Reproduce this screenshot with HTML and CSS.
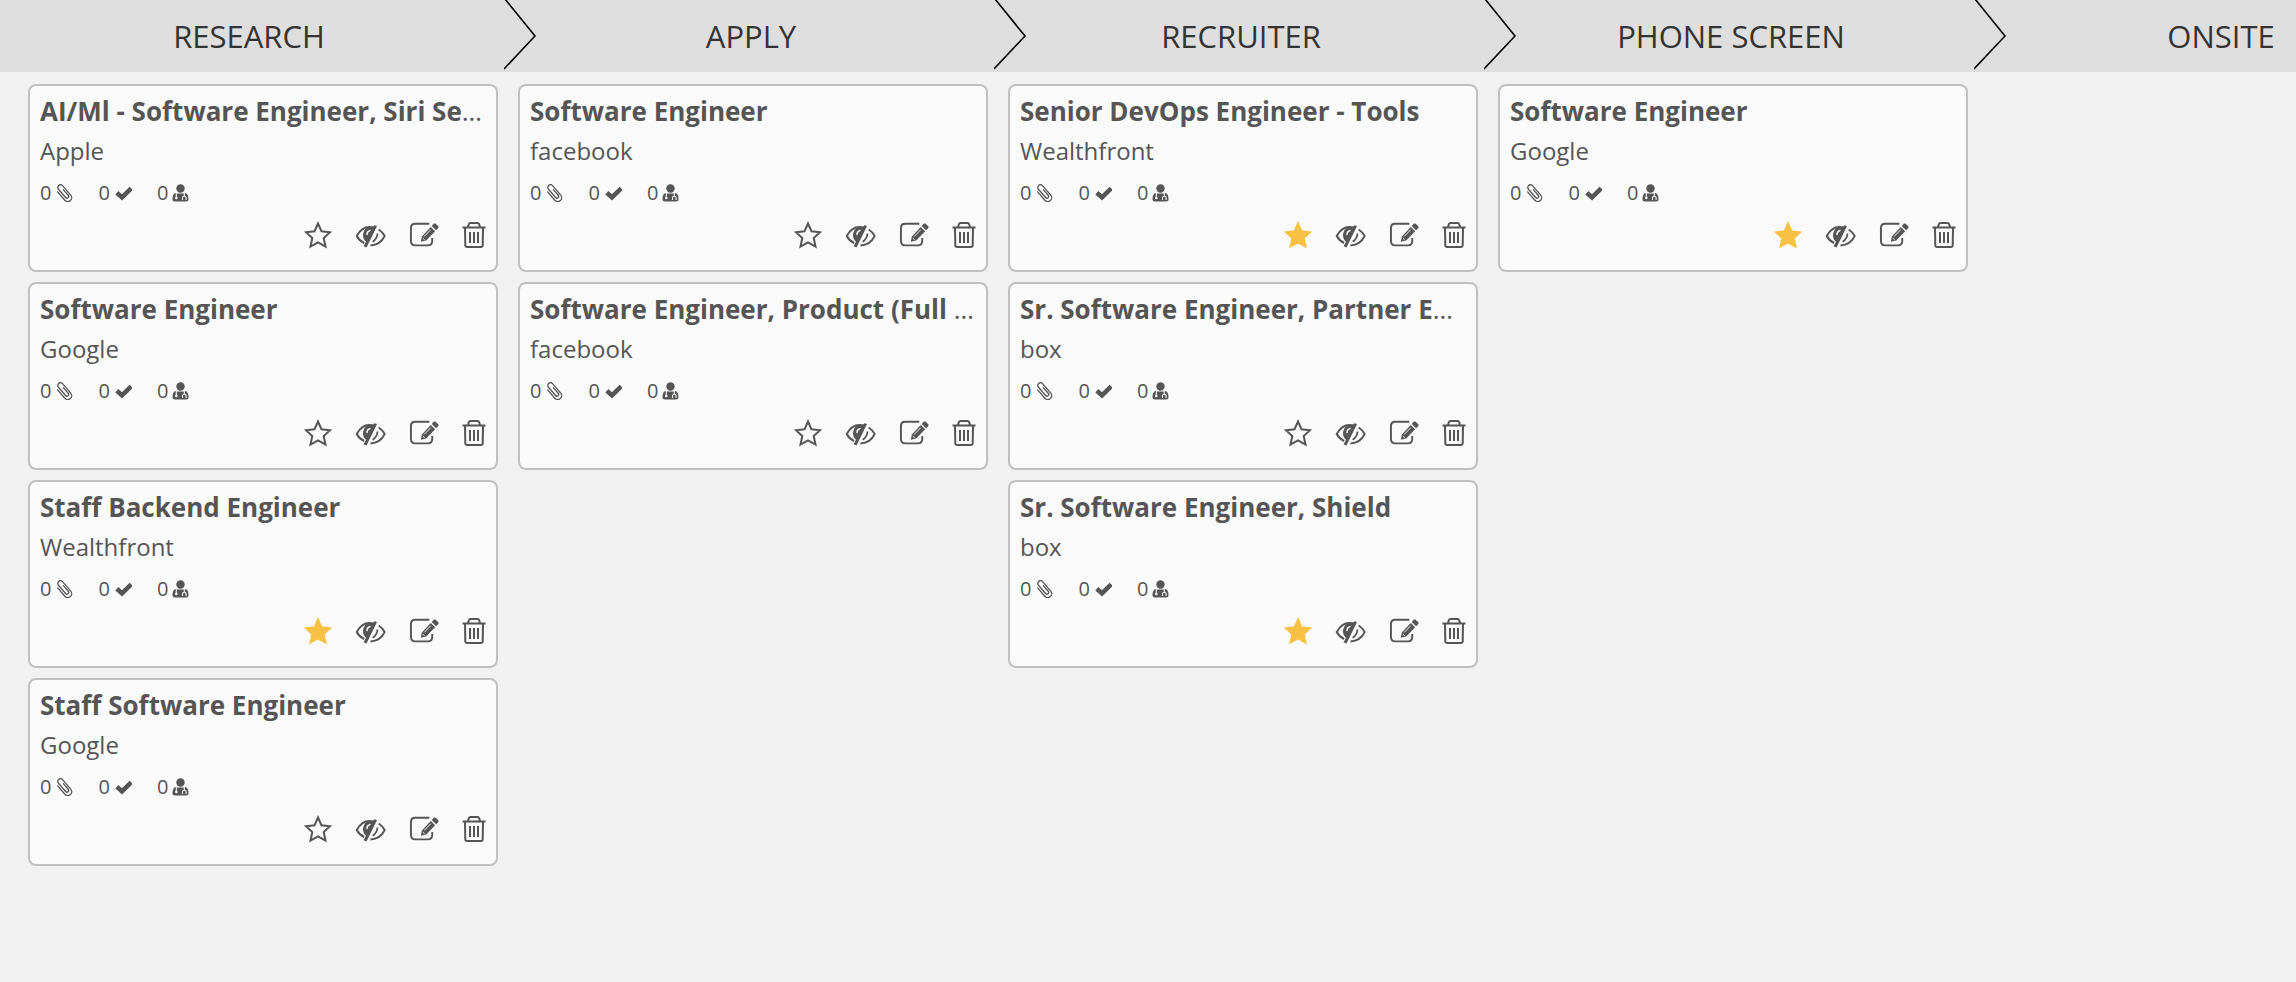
FILE: index.html
```html
<!DOCTYPE html>
<html lang="en">
<head>
<meta charset="utf-8">
<title>Job board</title>
<link rel="stylesheet" href="styles.css">
</head>
<body>
<svg class="sprite" aria-hidden="true">
  <symbol id="clip" viewBox="0 0 18 18" overflow="visible">
    <path transform="rotate(-41 9 9)" d="M10.700 6V13.500a1.700 1.700 0 0 1-3.400 0V2.500a2.700 2.700 0 0 1 5.400 0V15a3.900 3.900 0 0 1-7.800 0V4" fill="none" stroke="currentColor" stroke-width="1.300" stroke-linecap="round"/>
  </symbol>
  <symbol id="check" viewBox="0 0 18 18" overflow="visible">
    <path d="M2.800 8.800 8 13.300 17.200 4.300" fill="none" stroke="currentColor" stroke-width="4.600"/>
  </symbol>
  <symbol id="person" viewBox="0 0 18 18">
    <circle cx="8.500" cy="4.500" r="4.200" fill="currentColor"/>
    <path d="M3.500 9C1.300 9.800.5 12 .5 15c0 1.800.8 2.500 2.500 2.500h11c1.700 0 2.500-.7 2.500-2.500 0-3-.8-5.200-3-6L12 9.500h-7z" fill="currentColor"/>
    <path d="M4.300 9v4M12.300 9v3M10.500 16v-2.300q0-1.500 1.800-1.500t1.800 1.500V16" fill="none" stroke="#fafafa" stroke-width="1.100"/>
    <circle cx="4.300" cy="14" r="1.300" fill="#fafafa"/>
  </symbol>
  <symbol id="star" viewBox="0 0 28 28">
    <path d="M14 2.500 17.500 10.300 26 11.300 19.700 17 21.500 25.600 14 21.400 6.500 25.600 8.300 17 2 11.300 10.500 10.300Z" stroke="currentColor" stroke-width="2"/>
  </symbol>
  <symbol id="eye" viewBox="0 0 31 28">
    <path d="M19 6.500C11 4.500 5 8.500 1.800 15c1.600 3.300 4 5.500 7.300 7" fill="none" stroke="currentColor" stroke-width="2"/>
    <path d="M19.200 4.200 22 5 11.500 26.500 8.600 25.300 11 20.700C6.500 17 7.500 10 11.500 7L18 6.500Z" fill="currentColor"/>
    <path d="M12 13.500Q12 10.300 15 9.500" fill="none" stroke="#fafafa" stroke-width="1.500" stroke-linecap="round"/>
    <path d="M23.700 8.500Q27.500 11 29.700 15 25.500 23.800 15.500 24.500M22.500 12.500Q22.300 17.500 17.700 20.800" fill="none" stroke="currentColor" stroke-width="1.800"/>
  </symbol>
  <symbol id="edit" viewBox="0 0 31 28">
    <path d="M21 2.300H6.500Q2 2.300 2 6.800V20.200Q2 24.700 6.500 24.700H19.500Q24 24.700 24 20.200V17" fill="none" stroke="currentColor" stroke-width="2"/>
    <path d="M12.200 21 13.300 15.500 22.500 5.700 27 10 17.800 19.700Z" fill="currentColor"/>
    <path d="M23.500 4.700 25.700 2.200 27.300 2.100 30.500 5.200 30.400 6.700 28 9Z" fill="currentColor"/>
    <path d="M15.700 15.500 22.500 8.500M14.300 17.200 16.200 19" fill="none" stroke="#fafafa" stroke-width="1"/>
  </symbol>
  <symbol id="trash" viewBox="0 0 24 28">
    <path d="M.5 6.500H23.500M6 6 6.800 3.200Q7.200 2 8.500 2H15.500Q16.800 2 17.200 3.200L18 6M3 7 3.300 24.200Q3.400 26 5.200 26H18.800Q20.600 26 20.700 24.200L21 7M8 11V22M12 11V22M16 11V22" fill="none" stroke="currentColor" stroke-width="2"/>
  </symbol>
  <symbol id="chevron" viewBox="0 0 32 72">
    <path d="M1-1 31 36 0 69" fill="none" stroke="#000" stroke-width="1.600"/>
  </symbol>
</svg>

<header class="stages">
  <h2 class="stage">RESEARCH<svg class="chevron"><use href="#chevron"/></svg></h2>
  <h2 class="stage">APPLY<svg class="chevron"><use href="#chevron"/></svg></h2>
  <h2 class="stage">RECRUITER<svg class="chevron"><use href="#chevron"/></svg></h2>
  <h2 class="stage">PHONE SCREEN<svg class="chevron"><use href="#chevron"/></svg></h2>
  <h2 class="stage">ONSITE</h2>
</header>

<main class="board" id="board"></main>

<script src="board.js"></script>
</body>
</html>
```

FILE: styles.css
```css
* {
  box-sizing: border-box;
}

body {
  margin: 0;
  min-height: 100vh;
  background: #f1f1f1;
  color: #555;
  font-family: "Open Sans", "Noto Sans", sans-serif;
  overflow: hidden;
}

.sprite {
  display: none;
}

.stages {
  display: flex;
  overflow: hidden;
  background: #dedede;
}

.stage {
  position: relative;
  flex: 0 0 490px;
  margin: 0;
  padding: 14px 0;
  color: #333;
  font-size: 31px;
  font-weight: 400;
  line-height: 44px;
  text-align: center;
}

.stage:first-child {
  flex-basis: 506px;
  padding-right: 8px;
}

.chevron {
  position: absolute;
  top: 0;
  right: -30px;
  width: 32px;
  height: 72px;
  z-index: 1;
}

.board {
  display: flex;
  gap: 20px;
  padding: 12px 28px;
}

.column {
  display: flex;
  flex: 0 0 470px;
  flex-direction: column;
  gap: 10px;
  min-width: 0;
}

.card {
  padding: 5px 10px 21px;
  background: #fafafa;
  border: 2px solid #c0c0c0;
  border-radius: 8px;
}

.title {
  margin: 0;
  font-size: 26px;
  font-weight: 400;
  line-height: 40px;
  overflow: hidden;
  text-overflow: ellipsis;
  white-space: nowrap;
}

.company {
  margin: 0;
  font-size: 24px;
  line-height: 40px;
}

.counts {
  display: flex;
  gap: 25px;
  margin: 0;
  padding: 0;
  font-size: 20px;
  line-height: 44px;
  list-style: none;
}

.count {
  display: flex;
  gap: 4px;
  align-items: center;
}

.count svg {
  width: 18px;
  height: 18px;
}

.actions {
  display: flex;
  gap: 23px;
  justify-content: flex-end;
  padding-top: 6px;
}

.action {
  display: block;
  width: 31px;
  height: 28px;
  padding: 0;
  background: none;
  border: 0;
  color: inherit;
  cursor: pointer;
}

.action svg {
  display: block;
  width: 100%;
  height: 100%;
}

.edit {
  width: 30px;
}

.star {
  width: 28px;
  fill: none;
}

.starred {
  color: #f7c244;
  fill: currentColor;
}

.trash {
  width: 24px;
}
```

FILE: board.js
```js
const columns = [
  [
    ["AI/Ml - Software Engineer, Siri Search", "Apple", false],
    ["Software Engineer", "Google", false],
    ["Staff Backend Engineer", "Wealthfront", true],
    ["Staff Software Engineer", "Google", false]
  ],
  [
    ["Software Engineer", "facebook", false],
    ["Software Engineer, Product (Full Stack)", "facebook", false]
  ],
  [
    ["Senior DevOps Engineer - Tools", "Wealthfront", true],
    ["Sr. Software Engineer, Partner Engineering", "box", false],
    ["Sr. Software Engineer, Shield", "box", true]
  ],
  [
    ["Software Engineer", "Google", true]
  ]
];

const icon = name => `<svg aria-hidden="true"><use href="#${name}"/></svg>`;
const count = name => `<li class="count">0${icon(name)}</li>`;
const action = (name, label, extra = "") =>
  `<button type="button" class="action ${name} ${extra}" aria-label="${label}">${icon(name)}</button>`;

const card = ([title, company, starred]) => `
  <article class="card">
    <h3 class="title"><strong>${title}</strong></h3>
    <p class="company">${company}</p>
    <ul class="counts">${count("clip")}${count("check")}${count("person")}</ul>
    <div class="actions">
      ${action("star", "Star", starred ? "starred" : "")}
      ${action("eye", "Hide")}
      ${action("edit", "Edit")}
      ${action("trash", "Delete")}
    </div>
  </article>`;

document.getElementById("board").innerHTML = columns
  .map(cards => `<section class="column">${cards.map(card).join("")}</section>`)
  .join("");
```
